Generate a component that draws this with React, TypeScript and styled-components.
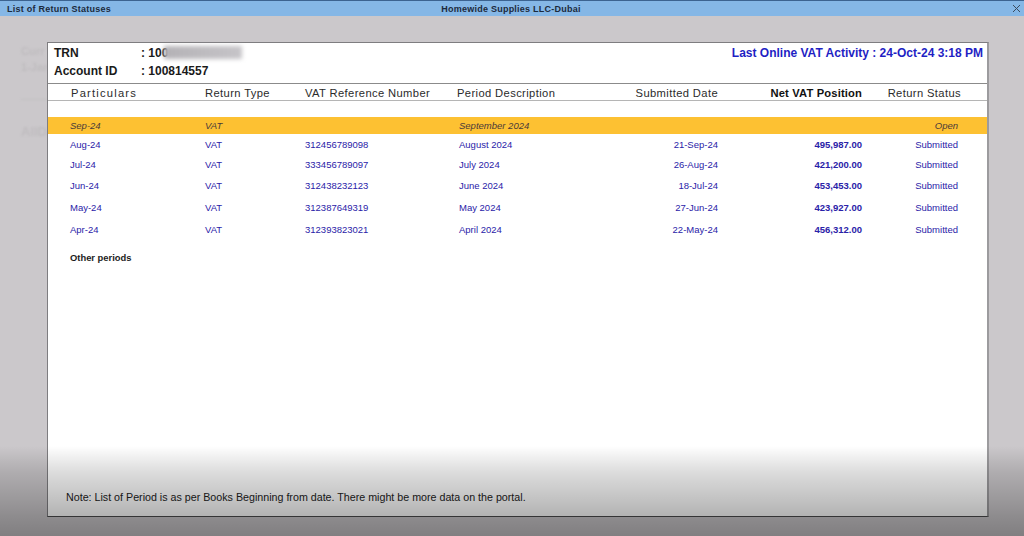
import React from "react";
import styled, { createGlobalStyle } from "styled-components";

const Global = createGlobalStyle`
  html, body { margin: 0; padding: 0; width: 1024px; height: 536px; overflow: hidden; }
  body { font-family: "Liberation Sans", Arial, sans-serif; }
`;

const Page = styled.div`
  position: relative;
  width: 1024px;
  height: 536px;
  display: flex;
  flex-direction: column;
  background: #cbc8cb;
  overflow: hidden;
`;

const TitleBar = styled.header`
  height: 15px;
  flex: none;
  display: grid;
  grid-template-columns: 1fr auto 1fr;
  align-items: center;
  padding: 0 9px 0 7px;
  background: #85b7e6;
  border-top: 1px solid #3c6390;
  color: #1c2a3c;
  font-size: 9px;
  font-weight: 700;
  letter-spacing: 0.24px;
`;

const CloseIcon = styled.svg`
  justify-self: end;
  width: 9px;
  height: 9px;
  margin-right: -6px;
  stroke: #3b4a5c;
  stroke-width: 1;
  fill: none;
`;

const Stage = styled.main`
  flex: 1;
  display: flex;
  padding: 26px 35px 19px 47px;
  min-height: 0;
`;

const Backdrop = styled.div`
  position: absolute;
  left: 21px;
  top: 45px;
  color: #bfbcbf;
  font-weight: 700;
  font-size: 11px;
  filter: blur(1.1px);
  display: flex;
  flex-direction: column;
  gap: 4px;
`;

const BackdropRule = styled.div`
  width: 26px;
  height: 1px;
  background: #c2bfc2;
  margin-top: 22px;
`;

const BackdropBig = styled.div`
  font-size: 13px;
  margin-top: 20px;
`;

const Modal = styled.section`
  position: relative;
  flex: 1;
  display: flex;
  flex-direction: column;
  background: #fff;
  border: 1px solid #7e7d80;
  border-right: 2px solid #9c9b9e;
  border-bottom-color: #4a4a4c;
  min-width: 0;
`;

const Info = styled.div`
  height: 40px;
  flex: none;
  display: flex;
  justify-content: space-between;
  padding: 1px 4px 0 6px;
  box-sizing: border-box;
  font-size: 12px;
  font-weight: 700;
  color: #1a1a1a;
`;

const InfoList = styled.div`
  display: grid;
  grid-template-columns: 87px auto;
  grid-auto-rows: 18px;
  align-items: center;
`;

const Hidden = styled.span`
  display: inline-block;
  width: 78px;
  height: 13px;
  margin-left: -4px;
  vertical-align: -2px;
  background: linear-gradient(to right, #b4b2b6, #c6c4c8);
  filter: blur(2.2px);
`;

const Activity = styled.div`
  color: #1f1fc4;
  height: 18px;
  line-height: 18px;
  font-size: 12px;
`;

const Grid = styled.div<{ $h: number }>`
  display: grid;
  grid-template-columns: 134px 100px 152px 150px 111px 144px 99px;
  height: ${(p) => p.$h}px;
  flex: none;
  align-items: center;
  padding-left: 23px;
  box-sizing: border-box;
`;

const HeaderRow = styled(Grid)`
  padding-top: 1px;
  border-top: 1px solid #8b8b8b;
  border-bottom: 1px solid #b5b5b5;
  color: #2b2b2b;
  font-size: 11.2px;
  letter-spacing: 0.38px;
  margin-bottom: 16px;
`;

const HeaderCell = styled.div<{ $right?: boolean; $strong?: boolean; $wide?: boolean }>`
  text-align: ${(p) => (p.$right ? "right" : "left")};
  font-weight: ${(p) => (p.$strong ? 700 : 400)};
  letter-spacing: ${(p) => (p.$wide ? "1.2px" : p.$strong ? "0.15px" : "inherit")};
  color: ${(p) => (p.$strong ? "#111" : "inherit")};
  white-space: nowrap;
`;

const Row = styled(Grid)<{ $open?: boolean }>`
  font-size: 9.5px;
  color: ${(p) => (p.$open ? "#4a3a3a" : "#2a22a8")};
  font-style: ${(p) => (p.$open ? "italic" : "normal")};
  background: ${(p) => (p.$open ? "#fdc132" : "transparent")};
`;

const Cell = styled.div<{ $right?: boolean; $bold?: boolean; $status?: boolean; $inset?: boolean; $lead?: boolean }>`
  text-align: ${(p) => (p.$right || p.$status ? "right" : "left")};
  font-weight: ${(p) => (p.$bold ? 700 : 400)};
  padding-right: ${(p) => (p.$status ? "3px" : "0")};
  padding-left: ${(p) => (p.$inset ? "2px" : "0")};
  margin-left: ${(p) => (p.$lead ? "-1px" : "0")};
  white-space: nowrap;
`;

const Other = styled.div`
  margin: 12px 0 0 22px;
  font-size: 9.4px;
  font-weight: 700;
  color: #1c1c1c;
`;

const Note = styled.div`
  margin-top: auto;
  padding: 0 0 13px 18px;
  font-size: 10.7px;
  color: #222;
`;

const Shade = styled.div`
  position: absolute;
  left: 0;
  right: 0;
  bottom: 0;
  height: 90px;
  pointer-events: none;
  background: linear-gradient(
    to bottom,
    rgba(0, 0, 0, 0) 0%,
    rgba(0, 0, 0, 0.06) 12%,
    rgba(0, 0, 0, 0.14) 30%,
    rgba(0, 0, 0, 0.24) 60%,
    rgba(0, 0, 0, 0.3) 78%,
    rgba(0, 0, 0, 0.37) 100%
  );
`;

type R = { m: string; ref: string; period: string; date: string; net: string; status: string; h: number; open?: boolean };

const rows: R[] = [
  { m: "Sep-24", ref: "", period: "September 2024", date: "", net: "", status: "Open", h: 17, open: true },
  { m: "Aug-24", ref: "312456789098", period: "August 2024", date: "21-Sep-24", net: "495,987.00", status: "Submitted", h: 21 },
  { m: "Jul-24", ref: "333456789097", period: "July 2024", date: "26-Aug-24", net: "421,200.00", status: "Submitted", h: 19 },
  { m: "Jun-24", ref: "312438232123", period: "June 2024", date: "18-Jul-24", net: "453,453.00", status: "Submitted", h: 22 },
  { m: "May-24", ref: "312387649319", period: "May 2024", date: "27-Jun-24", net: "423,927.00", status: "Submitted", h: 23 },
  { m: "Apr-24", ref: "312393823021", period: "April 2024", date: "22-May-24", net: "456,312.00", status: "Submitted", h: 21 },
];

export default function App() {
  return (
    <Page>
      <Global />
      <TitleBar>
        <span>List of Return Statuses</span>
        <span>Homewide Supplies LLC-Dubai</span>
        <CloseIcon viewBox="0 0 9 9">
          <path d="M1 1l7 7M8 1l-7 7" />
        </CloseIcon>
      </TitleBar>
      <Stage>
        <Backdrop>
          <span>Curr</span>
          <span>1-Jan</span>
          <BackdropRule />
          <BackdropBig>AllDa</BackdropBig>
        </Backdrop>
        <Modal>
          <Info>
            <InfoList>
              <span>TRN</span>
              <span>
                : 100
                <Hidden />
              </span>
              <span>Account ID</span>
              <span>: 100814557</span>
            </InfoList>
            <Activity>Last Online VAT Activity : 24-Oct-24 3:18 PM</Activity>
          </Info>
          <HeaderRow $h={18}>
            <HeaderCell $wide>Particulars</HeaderCell>
            <HeaderCell>Return Type</HeaderCell>
            <HeaderCell>VAT Reference Number</HeaderCell>
            <HeaderCell>Period Description</HeaderCell>
            <HeaderCell $right>Submitted Date</HeaderCell>
            <HeaderCell $right $strong>Net VAT Position</HeaderCell>
            <HeaderCell $right>Return Status</HeaderCell>
          </HeaderRow>
          {rows.map((r) => (
            <Row key={r.m} $h={r.h} $open={r.open}>
              <Cell $lead>{r.m}</Cell>
              <Cell>VAT</Cell>
              <Cell>{r.ref}</Cell>
              <Cell $inset>{r.period}</Cell>
              <Cell $right>{r.date}</Cell>
              <Cell $right $bold>{r.net}</Cell>
              <Cell $status>{r.status}</Cell>
            </Row>
          ))}
          <Other>Other periods</Other>
          <Note>Note: List of Period is as per Books Beginning from date. There might be more data on the portal.</Note>
        </Modal>
      </Stage>
      <Shade />
    </Page>
  );
}
